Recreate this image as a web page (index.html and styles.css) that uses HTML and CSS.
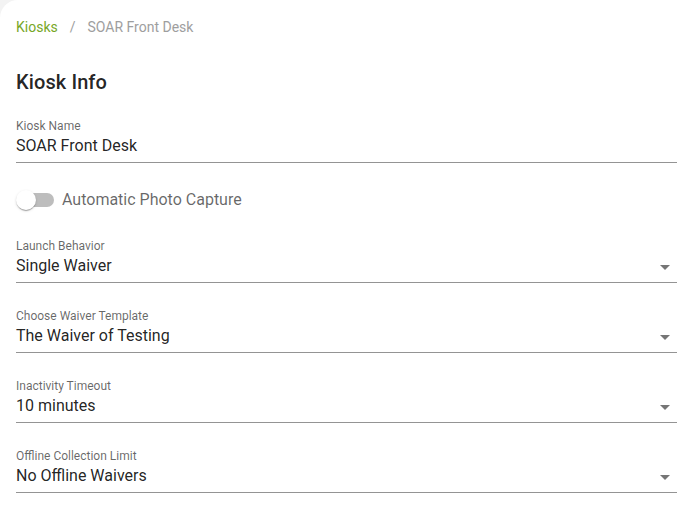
FILE: index.html
```html
<!DOCTYPE html>
<html>
<head>
<meta charset="utf-8">
<link rel="stylesheet" href="styles.css">
</head>
<body>
<div class="card">
  <nav class="crumbs">
    <a class="crumb-link">Kiosks</a>
    <span class="crumb-sep">/</span>
    <span class="crumb-current">SOAR Front Desk</span>
  </nav>
  <h1 class="title">Kiosk Info</h1>

  <div class="field text-field">
    <div class="label">Kiosk Name</div>
    <div class="control"><span class="value">SOAR Front Desk</span></div>
  </div>

  <div class="toggle-row">
    <span class="switch"><span class="track"></span><span class="thumb"></span></span>
    <span class="toggle-label">Automatic Photo Capture</span>
  </div>

  <div class="field select-field first">
    <div class="label">Launch Behavior</div>
    <div class="control"><span class="value">Single Waiver</span><span class="arrow"></span></div>
  </div>

  <div class="field select-field">
    <div class="label">Choose Waiver Template</div>
    <div class="control"><span class="value">The Waiver of Testing</span><span class="arrow"></span></div>
  </div>

  <div class="field select-field">
    <div class="label">Inactivity Timeout</div>
    <div class="control"><span class="value">10 minutes</span><span class="arrow"></span></div>
  </div>

  <div class="field select-field">
    <div class="label">Offline Collection Limit</div>
    <div class="control"><span class="value">No Offline Waivers</span><span class="arrow"></span></div>
  </div>
</div>
</body>
</html>
```

FILE: styles.css
```css
html, body {
  margin: 0;
  padding: 0;
  background: #f3f3f3;
  font-family: Roboto, "Liberation Sans", Arial, sans-serif;
  color: rgba(0, 0, 0, 0.87);
}

.card {
  background: #ffffff;
  border-top-left-radius: 18px;
  min-height: 506px;
  box-sizing: border-box;
  padding: 17px 21px 0 16px;
}

.crumbs {
  display: flex;
  align-items: center;
  font-size: 14px;
  line-height: 20px;
  height: 20px;
}

.crumb-link {
  color: #77a728;
}

.crumb-sep {
  color: #9e9e9e;
  margin: 0 12px;
}

.crumb-current {
  color: #9e9e9e;
}

.title {
  margin: 29px 0 0 0;
  font-size: 20px;
  line-height: 32px;
  font-weight: 500;
  color: rgba(0, 0, 0, 0.87);
  letter-spacing: 0.1px;
}

.field {
  display: flex;
  flex-direction: column;
}

.text-field {
  margin-top: 20px;
}

.label {
  font-size: 12px;
  line-height: 16px;
  color: rgba(0, 0, 0, 0.6);
}

.control {
  display: flex;
  align-items: center;
  margin-top: 2px;
  padding-bottom: 6px;
  border-bottom: 1px solid rgba(0, 0, 0, 0.42);
  height: 20px;
}

.value {
  flex: 1;
  font-size: 16px;
  line-height: 20px;
}

.arrow {
  width: 0;
  height: 0;
  border-left: 5px solid transparent;
  border-right: 5px solid transparent;
  border-top: 5px solid rgba(0, 0, 0, 0.54);
  margin-right: 7px;
  margin-top: 2px;
}

.toggle-row {
  display: flex;
  align-items: center;
  margin-top: 27px;
  height: 20px;
}

.switch {
  position: relative;
  width: 38px;
  height: 20px;
  display: inline-block;
  margin-right: 8px;
}

.track {
  position: absolute;
  left: 2px;
  top: 3px;
  width: 36px;
  height: 14px;
  border-radius: 7px;
  background: #bdbdbd;
}

.thumb {
  position: absolute;
  left: 0;
  top: 0;
  width: 20px;
  height: 20px;
  border-radius: 50%;
  background: #ffffff;
  box-shadow: 0 2px 1px -1px rgba(0,0,0,0.2), 0 1px 1px 0 rgba(0,0,0,0.14), 0 1px 3px 0 rgba(0,0,0,0.12);
}

.toggle-label {
  font-size: 16px;
  line-height: 20px;
  color: rgba(0, 0, 0, 0.6);
}

.select-field {
  margin-top: 25px;
}

.select-field.first {
  margin-top: 28px;
}
```
